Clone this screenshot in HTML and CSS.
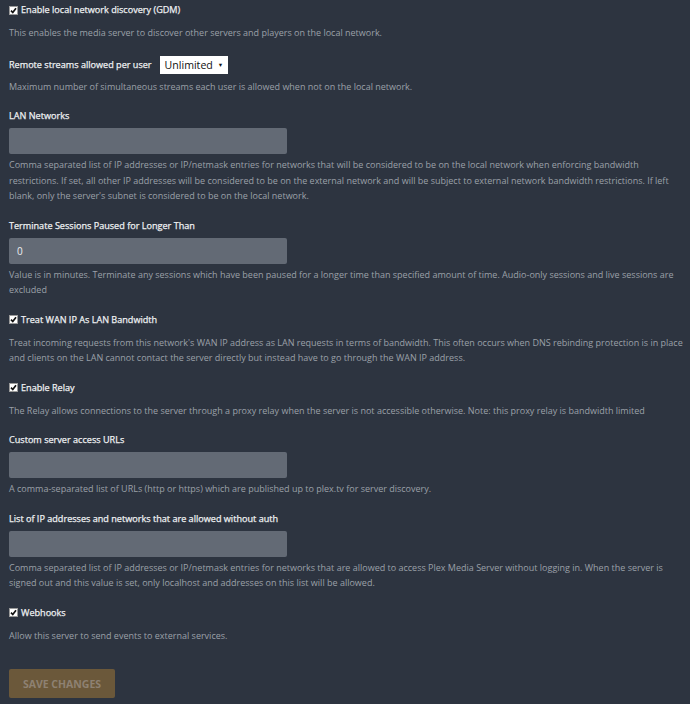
FILE: index.html
```html
<!DOCTYPE html>
<html lang="en">
<head>
    <meta charset="UTF-8">
    <meta name="viewport" content="width=device-width, initial-scale=1.0">
    <title>Network Settings</title>
    <link rel="stylesheet" href="styles.css">
</head>
<body>
    <form class="settings">
        <div class="group">
            <label class="check-label">
                <svg class="check" width="9" height="9" viewBox="0 0 9 9"><rect x="0.5" y="0.5" width="8" height="8" fill="#fff" stroke="#9a9a9a"/><path d="M2 4.6 L3.8 6.5 L7 2.3" fill="none" stroke="#111" stroke-width="1.7"/></svg>
                Enable local network discovery (GDM)
            </label>
            <p class="help">This enables the media server to discover other servers and players on the local network.</p>
        </div>

        <div class="group">
            <div class="inline-row">
                <span class="label">Remote streams allowed per user</span>
                <div class="select">Unlimited <span class="arrow">▼</span></div>
            </div>
            <p class="help">Maximum number of simultaneous streams each user is allowed when not on the local network.</p>
        </div>

        <div class="group">
            <span class="label">LAN Networks</span>
            <div class="field"></div>
            <p class="help">Comma separated list of IP addresses or IP/netmask entries for networks that will be considered to be on the local network when enforcing bandwidth restrictions. If set, all other IP addresses will be considered to be on the external network and will be subject to external network bandwidth restrictions. If left blank, only the server's subnet is considered to be on the local network.</p>
        </div>

        <div class="group">
            <span class="label">Terminate Sessions Paused for Longer Than</span>
            <div class="field">0</div>
            <p class="help">Value is in minutes. Terminate any sessions which have been paused for a longer time than specified amount of time. Audio-only sessions and live sessions are excluded</p>
        </div>

        <div class="group">
            <label class="check-label">
                <svg class="check" width="9" height="9" viewBox="0 0 9 9"><rect x="0.5" y="0.5" width="8" height="8" fill="#fff" stroke="#9a9a9a"/><path d="M2 4.6 L3.8 6.5 L7 2.3" fill="none" stroke="#111" stroke-width="1.7"/></svg>
                Treat WAN IP As LAN Bandwidth
            </label>
            <p class="help">Treat incoming requests from this network's WAN IP address as LAN requests in terms of bandwidth. This often occurs when DNS rebinding protection is in place and clients on the LAN cannot contact the server directly but instead have to go through the WAN IP address.</p>
        </div>

        <div class="group">
            <label class="check-label">
                <svg class="check" width="9" height="9" viewBox="0 0 9 9"><rect x="0.5" y="0.5" width="8" height="8" fill="#fff" stroke="#9a9a9a"/><path d="M2 4.6 L3.8 6.5 L7 2.3" fill="none" stroke="#111" stroke-width="1.7"/></svg>
                Enable Relay
            </label>
            <p class="help">The Relay allows connections to the server through a proxy relay when the server is not accessible otherwise. Note: this proxy relay is bandwidth limited</p>
        </div>

        <div class="group">
            <span class="label">Custom server access URLs</span>
            <div class="field"></div>
            <p class="help">A comma-separated list of URLs (http or https) which are published up to plex.tv for server discovery.</p>
        </div>

        <div class="group">
            <span class="label">List of IP addresses and networks that are allowed without auth</span>
            <div class="field"></div>
            <p class="help">Comma separated list of IP addresses or IP/netmask entries for networks that are allowed to access Plex Media Server without logging in. When the server is signed out and this value is set, only localhost and addresses on this list will be allowed.</p>
        </div>

        <div class="group">
            <label class="check-label">
                <svg class="check" width="9" height="9" viewBox="0 0 9 9"><rect x="0.5" y="0.5" width="8" height="8" fill="#fff" stroke="#9a9a9a"/><path d="M2 4.6 L3.8 6.5 L7 2.3" fill="none" stroke="#111" stroke-width="1.7"/></svg>
                Webhooks
            </label>
            <p class="help">Allow this server to send events to external services.</p>
        </div>

        <button type="button" class="save">Save Changes</button>
    </form>
</body>
</html>
```

FILE: styles.css
```css
body {
    margin: 0;
    padding: 3px 2px 0 9px;
    background-color: #2d3440;
    font-family: "Open Sans", "Liberation Sans", sans-serif;
    color: #eef0f2;
}
.group {
    margin-bottom: 15px;
}
.label, .check-label {
    display: block;
    font-size: 9.1px;
    font-weight: 400;
    line-height: 14px;
    -webkit-text-stroke: 0.25px #eef0f2;
}
.check-label {
    display: flex;
    align-items: center;
    gap: 3px;
    margin-bottom: 8px;
}
.check {
    flex: none;
}
.group > .label {
    margin-bottom: 5px;
}
.help {
    margin: 0;
    font-size: 9px;
    line-height: 15.5px;
    color: #9ba0a8;
}
.field {
    width: 278px;
    height: 26px;
    box-sizing: border-box;
    padding: 0 8px;
    margin-bottom: 3px;
    background-color: #636a75;
    border-radius: 2px;
    color: #eceef0;
    font-size: 10px;
    line-height: 26px;
}
.inline-row {
    display: flex;
    align-items: center;
    gap: 8px;
    height: 18px;
    margin-bottom: 5px;
}
.select {
    display: flex;
    align-items: center;
    height: 18px;
    box-sizing: border-box;
    padding: 0 5px;
    background: #fff;
    color: #111;
    font-size: 10.6px;
    -webkit-text-stroke: 0;
}
.arrow {
    font-size: 5.5px;
    margin-left: 5px;
}
.save {
    display: block;
    width: 106px;
    height: 29px;
    margin-top: 26px;
    padding: 0;
    background-color: #6b583a;
    border: none;
    border-radius: 2px;
    color: #8e8172;
    font-family: inherit;
    font-size: 10.5px;
    font-weight: 700;
    text-transform: uppercase;
}
```
